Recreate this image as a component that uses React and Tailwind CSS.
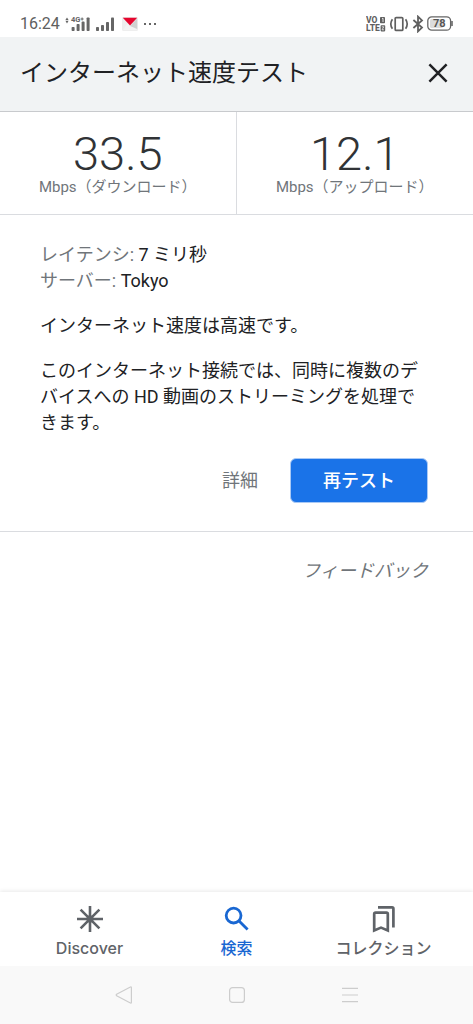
import { Fragment } from "react";

const results = [
    { value: "33.5", label: "Mbps（ダウンロード）" },
    { value: "12.1", label: "Mbps（アップロード）" },
];

const details = [
    { term: "レイテンシ", value: "7 ミリ秒" },
    { term: "サーバー", value: "Tokyo" },
];

function SignalBars() {
    return (
        <svg viewBox="0 0 20 16" className="h-4 w-5" fill="#666">
            <rect x="1" y="11" width="3" height="4" rx="0.8" />
            <rect x="6" y="9" width="3" height="6" rx="0.8" />
            <rect x="11" y="6" width="3" height="9" rx="0.8" />
            <rect x="16" y="1.4" width="3" height="13.6" rx="0.8" />
        </svg>
    );
}

function NetworkSignal() {
    return (
        <svg viewBox="0 0 26 16" className="h-4 w-[26px]" fill="#666">
            <path d="M0.4 4 L2 1.4 L3.6 4Z M0.4 4.8 L2 7.4 L3.6 4.8Z" />
            <text x="6" y="6.4" fontSize="7.5" fontWeight="700">4G</text>
            <path d="M15.6 2.4h3v1h-3z M16.6 1.4h1v3h-1z" />
            <rect x="6.6" y="11" width="3" height="4" rx="0.8" />
            <rect x="11.6" y="8" width="3" height="7" rx="0.8" />
            <rect x="16.6" y="5.6" width="3" height="9.4" rx="0.8" />
            <rect x="21.6" y="1.4" width="3" height="13.6" rx="0.8" />
        </svg>
    );
}

function StatusBar() {
    return (
        <div className="flex h-[37px] items-center justify-between px-5 pt-2.5 text-[#606060]">
            <div className="flex items-center">
                <span className="w-[45px] text-[16px] leading-5">16:24</span>
                <NetworkSignal />
                <span className="ml-1 flex">
                    <SignalBars />
                </span>
                <svg viewBox="0 0 16 14" className="ml-[7px] h-3.5 w-4">
                    <rect width="16" height="14" rx="1.5" fill="#eeeeee" />
                    <path d="M1 13 L6 6 H10 L15 13Z" fill="#f3f3f3" />
                    <path d="M8 9 L15.2 1.5 V12Z" fill="#d0d0d0" />
                    <path d="M0.8 0.8 H15.2 L8 8.6Z" fill="#e6062e" />
                </svg>
                <svg viewBox="0 0 14 4" className="ml-[5px] h-1 w-3.5" fill="#666">
                    <rect x="1" y="1" width="2" height="2" />
                    <rect x="6" y="1" width="2" height="2" />
                    <rect x="11" y="1" width="2" height="2" />
                </svg>
            </div>
            <div className="flex items-center gap-[3px]">
                <svg viewBox="0 0 20 16" className="h-4 w-5" fill="#606060">
                    <text x="0" y="7.2" fontSize="8.5" fontWeight="800">VO</text>
                    <text x="0" y="15.4" fontSize="8.5" fontWeight="800">LTE</text>
                    <rect x="14" y="1" width="5" height="6.2" rx="0.8" />
                    <rect x="14.6" y="9.2" width="4.6" height="6.2" rx="0.8" />
                    <path d="M16 2.6 L17 2.2 V6" fill="none" stroke="#fff" strokeWidth="0.8" />
                    <path d="M15.8 10.8 H17.8 L16 13.8 H18" fill="none" stroke="#fff" strokeWidth="0.7" />
                </svg>
                <svg viewBox="0 0 20 16" className="h-4 w-5" fill="none" stroke="#606060" strokeWidth="1.7">
                    <rect x="6.2" y="1.6" width="7.6" height="12.8" rx="1" />
                    <path d="M3.4 3.2 Q0.2 8 3.4 12.8 M16.6 3.2 Q19.8 8 16.6 12.8" />
                </svg>
                <svg viewBox="0 0 12 18" className="h-[18px] w-3" fill="none" stroke="#606060" strokeWidth="1.8">
                    <path d="M1.4 5 L10 12.6 L6 16.4 V1.6 L10 5.4 L1.4 13" />
                </svg>
                <svg viewBox="0 0 26 15" className="h-[15px] w-[26px]">
                    <rect x="3" y="3" width="13" height="9" rx="1.5" fill="#dcdcdc" />
                    <rect x="0.8" y="0.8" width="22.8" height="13.4" rx="4" fill="none" stroke="#666" strokeWidth="1.3" />
                    <path d="M25 5 V10" stroke="#666" strokeWidth="1.6" />
                    <text x="12.2" y="11.4" fontSize="11" fontWeight="700" fill="#555" textAnchor="middle">78</text>
                </svg>
            </div>
        </div>
    );
}

function DiscoverIcon() {
    return (
        <svg viewBox="0 0 28 28" className="size-7" stroke="#5f6368" strokeWidth="2.6">
            <path d="M14 1 V27 M1 14 H27 M4.6 4.6 L23.4 23.4 M23.4 4.6 L4.6 23.4" />
            <circle cx="14" cy="14" r="3.4" fill="#5f6368" stroke="none" />
        </svg>
    );
}

function SearchIcon() {
    return (
        <svg viewBox="0 0 28 28" className="size-7" fill="none" stroke="#1967d2" strokeWidth="2.8">
            <circle cx="10.6" cy="10.6" r="7.4" />
            <path d="M15.8 15.8 L24.6 24.6" />
        </svg>
    );
}

function CollectionsIcon() {
    return (
        <svg viewBox="0 0 28 28" className="size-7" fill="none" stroke="#5f6368" strokeWidth="2.7">
            <path d="M4.2 9 Q4.2 7.6 5.6 7.6 H16.4 Q17.8 7.6 17.8 9 V25.4 L11 22.6 L4.2 25.4Z" />
            <path d="M8 2.4 H22 Q23.4 2.4 23.4 3.8 V22.6" />
        </svg>
    );
}

const tabs = [
    { label: "Discover", Icon: DiscoverIcon },
    { label: "検索", Icon: SearchIcon, active: true },
    { label: "コレクション", Icon: CollectionsIcon },
];

function TabBar() {
    return (
        <nav className="mt-auto grid grid-cols-3 px-4 pt-[13px] pb-[7px] shadow-[0_-1px_4px_rgba(0,0,0,0.09)]">
            {tabs.map(({ label, Icon, active }) => (
                <button
                    key={label}
                    type="button"
                    aria-current={active ? "page" : undefined}
                    className={`flex flex-col items-center gap-1 font-[Inter,'Noto_Sans_CJK_JP',sans-serif] font-medium ${
                        active ? "text-[#1967d2]" : "text-[#5f6368]"
                    }`}
                >
                    <Icon />
                    <span className="text-[16px] leading-[22px] whitespace-nowrap">{label}</span>
                </button>
            ))}
        </nav>
    );
}

function SystemBar() {
    return (
        <div className="flex h-[58px] items-center justify-center gap-[95px] bg-[#f9f9f9]">
            <button type="button" aria-label="戻る">
                <svg viewBox="0 0 18 18" className="size-[18px]" fill="none" stroke="#cdcdcd" strokeWidth="1.2" strokeLinejoin="round">
                    <path d="M1.6 9.8 Q0.8 9 1.6 8.3 L15.4 1 Q16.4 0.6 16.4 1.8 V16.2 Q16.4 17.4 15.4 17Z" />
                </svg>
            </button>
            <button type="button" aria-label="ホーム">
                <svg viewBox="0 0 18 18" className="size-[18px]" fill="none" stroke="#cdcdcd" strokeWidth="1.2">
                    <rect x="1.6" y="1.6" width="14.8" height="14.8" rx="3" />
                </svg>
            </button>
            <button type="button" aria-label="メニュー">
                <svg viewBox="0 0 18 18" className="size-[18px]" stroke="#cdcdcd" strokeWidth="1.2">
                    <path d="M1 2.3 H17 M1 9 H17 M1 15.7 H17" />
                </svg>
            </button>
        </div>
    );
}

export default function App() {
    return (
        <div lang="ja" className="flex min-h-screen flex-col bg-white font-[Roboto,'Noto_Sans_CJK_JP',sans-serif] text-[#202124]">
            <StatusBar />

            <header className="flex h-[75px] items-center justify-between border-b border-[#c8cacd] bg-[#f1f3f4] pr-6 pb-0.5 pl-5">
                <h1 className="text-[24px] leading-8 whitespace-nowrap">インターネット速度テスト</h1>
                <button type="button" aria-label="閉じる">
                    <svg viewBox="0 0 22 22" className="size-[22px]" stroke="#202124" strokeWidth="2.5">
                        <path d="M2.4 2.4 L19.6 19.6 M19.6 2.4 L2.4 19.6" />
                    </svg>
                </button>
            </header>

            <main>
                <section className="grid grid-cols-2 divide-x divide-[#dadce0] border-b border-[#dadce0]">
                    {results.map((item) => (
                        <div key={item.label} className="flex flex-col items-center pt-[18px] pb-[18px]">
                            <span className="text-[47px] leading-[48px] font-light text-[#303336]">{item.value}</span>
                            <span className="text-[15px] leading-[18px] whitespace-nowrap text-[#70757a]">{item.label}</span>
                        </div>
                    ))}
                </section>

                <section className="border-b border-[#dadce0] pt-[27px] pr-[45px] pb-7 pl-10 text-[18px] leading-[26px]">
                    <p>
                        {details.map((item) => (
                            <Fragment key={item.term}>
                                <span className="text-[#70757a]">{item.term}: </span>
                                {item.value}
                                <br />
                            </Fragment>
                        ))}
                    </p>
                    <p className="mt-[19px]">インターネット速度は高速です。</p>
                    <p className="mt-[19px]">
                        このインターネット接続では、同時に複数のデバイスへの HD 動画のストリーミングを処理できます。
                    </p>
                    <div className="mt-[22px] flex items-center justify-end gap-8">
                        <button type="button" className="text-[#70757a]">詳細</button>
                        <button
                            type="button"
                            className="h-[45px] w-[138px] rounded-md border border-[#a9c9f5] bg-[#1a73e8] font-medium text-white"
                        >
                            再テスト
                        </button>
                    </div>
                </section>

                <div className="flex justify-end pt-[26px] pr-[45px]">
                    <a href="#feedback" className="text-[18px] leading-[26px] text-[#70757a] italic">フィードバック</a>
                </div>
            </main>

            <TabBar />
            <SystemBar />
        </div>
    );
}
